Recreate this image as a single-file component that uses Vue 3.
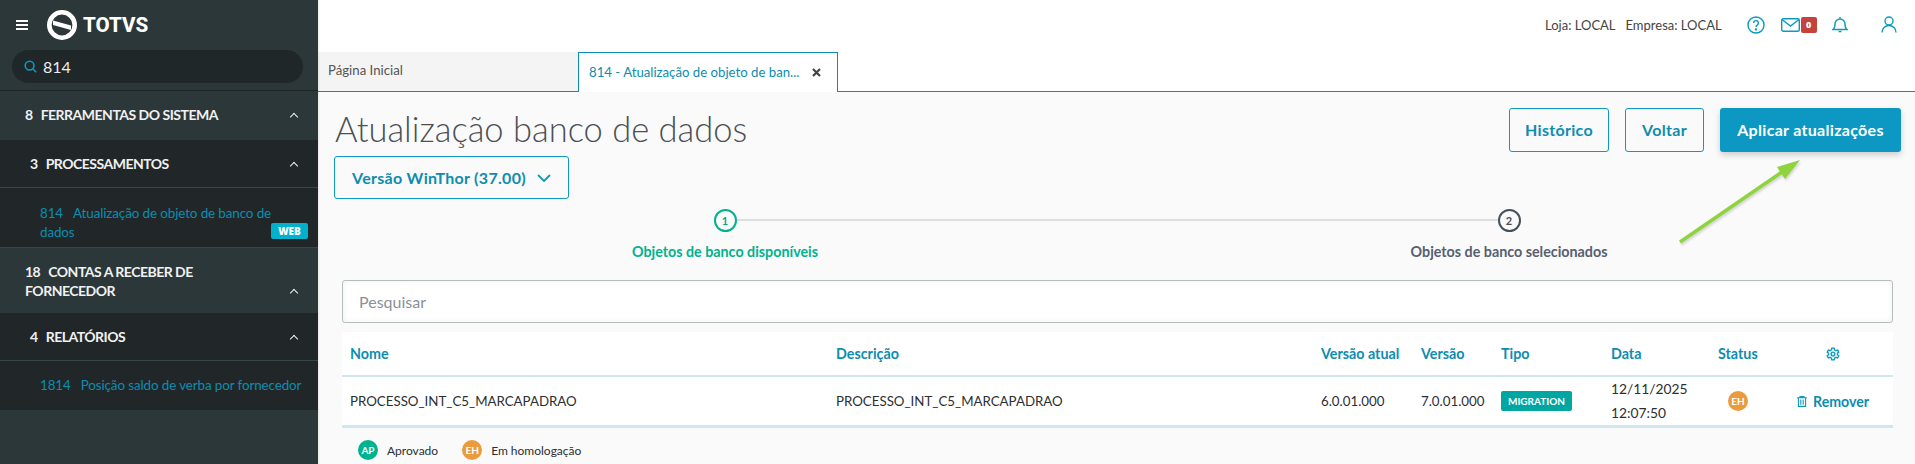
<script setup>
const headers = [
  { label: 'Nome' }, { label: 'Descrição' }, { label: 'Versão atual' }, { label: 'Versão' },
  { label: 'Tipo' }, { label: 'Data' }, { label: 'Status' }
]
</script>

<template>
  <div class="app">
    <aside class="side">
      <div class="brand">
        <svg class="burger" width="12" height="10" viewBox="0 0 12 10"><path d="M0 1h12M0 5h12M0 9h12" stroke="#fff" stroke-width="2"/></svg>
        <svg class="logo" width="30" height="30" viewBox="0 0 30 30">
          <circle cx="15" cy="15" r="12.700" fill="none" stroke="#fff" stroke-width="4.600"/>
          <path d="M6 10.500 L24 15.500 V20 L6 15 Z" fill="#fff"/>
        </svg>
        <span class="logotext">TOTVS</span>
      </div>
      <div class="searchwrap">
        <div class="search">
          <svg width="13" height="13" viewBox="0 0 13 13" fill="none" stroke="#0c9abe" stroke-width="1.6"><circle cx="5.600" cy="5.600" r="4.400"/><path d="M8.800 8.800 12.200 12.200"/></svg>
          <span>814</span>
        </div>
      </div>
      <div class="group g1"><span><b>8</b>FERRAMENTAS DO SISTEMA</span><i class="chev"></i></div>
      <div class="group g2 dark line"><span><b>3</b>PROCESSAMENTOS</span><i class="chev"></i></div>
      <div class="item i1 dark line">
        <span class="lnk"><em>814</em>Atualização de objeto de banco de dados</span>
        <span class="web">WEB</span>
      </div>
      <div class="group g3"><span><b>18</b>CONTAS A RECEBER DE FORNECEDOR</span><i class="chev"></i></div>
      <div class="group g4 dark line"><span><b>4</b>RELATÓRIOS</span><i class="chev"></i></div>
      <div class="item i2 dark"><span class="lnk"><em>1814</em>Posição saldo de verba por fornecedor</span></div>
    </aside>

    <main class="main">
      <header class="top">
        <span class="loc">Loja: LOCAL</span>
        <span class="loc emp">Empresa: LOCAL</span>
        <svg class="ic help" width="18" height="18" viewBox="0 0 18 18" fill="none" stroke="#0c9abe" stroke-width="1.4">
          <circle cx="9" cy="9" r="8"/><path d="M6.600 7a2.400 2.400 0 1 1 3.600 2.100c-.8.5-1.200.9-1.200 1.900"/><circle cx="9" cy="13.400" r=".5" fill="#0c9abe"/>
        </svg>
        <svg class="ic mail" width="19" height="14" viewBox="0 0 19 14" fill="none" stroke="#0c9abe" stroke-width="1.4">
          <rect x=".7" y=".7" width="17.600" height="12.600" rx="1.500"/><path d="M1 1.500 9.500 8 18 1.500"/>
        </svg>
        <span class="badge">0</span>
        <svg class="ic bell" width="16" height="17" viewBox="0 0 16 17" fill="none" stroke="#0c9abe" stroke-width="1.4">
          <path d="M1 13.500h14c-1.500-1-2-2.500-2-5.500a5 5 0 0 0-10 0c0 3-.5 4.500-2 5.500Z"/><path d="M6.500 15.500h3M8 1v1.500"/>
        </svg>
        <svg class="ic user" width="16" height="17" viewBox="0 0 16 17" fill="none" stroke="#0c9abe" stroke-width="1.4">
          <circle cx="8" cy="5" r="4"/><path d="M1 16.500c0-4 3-7 7-7s7 3 7 7"/>
        </svg>
      </header>

      <nav class="tabs">
        <div class="tab idle">Página Inicial</div>
        <div class="tab active">
          <span>814 - Atualização de objeto de ban...</span>
          <svg width="9" height="9" viewBox="0 0 9 9"><path d="M1 1 8 8M8 1 1 8" stroke="#444" stroke-width="2.200"/></svg>
        </div>
      </nav>

      <section class="content">
        <div class="headrow">
          <div class="titleblock">
            <h1>Atualização banco de dados</h1>
            <button class="btn select">
              Versão WinThor (37.00)
              <svg width="14" height="8" viewBox="0 0 14 8" fill="none" stroke="#0c9abe" stroke-width="1.8"><path d="M1 1l6 6 6-6"/></svg>
            </button>
          </div>
          <div class="actions">
            <button class="btn hist">Histórico</button>
            <button class="btn volt">Voltar</button>
            <button class="btn primary">Aplicar atualizações</button>
          </div>
        </div>

        <div class="stepper">
          <div class="step on"><span class="dot">1</span><span class="lab">Objetos de banco disponíveis</span></div>
          <div class="bar"></div>
          <div class="step"><span class="dot">2</span><span class="lab">Objetos de banco selecionados</span></div>
        </div>

        <div class="filter">Pesquisar</div>

        <div class="table">
          <div class="row head">
            <div v-for="h in headers" :key="h.label" class="cell">{{ h.label }}</div>
            <div class="cell gear">
              <svg width="14" height="14" viewBox="0 0 24 24" fill="none" stroke="#0c9abe" stroke-width="2.400">
                <circle cx="12" cy="12" r="3.200"/>
                <path d="M10 2h4l.6 3 2.400 1.400 2.900-1 2 3.400-2.300 2v2.400l2.300 2-2 3.400-2.900-1L14.600 19l-.6 3h-4l-.6-3L7 17.600l-2.900 1-2-3.400 2.300-2v-2.400l-2.300-2 2-3.400 2.900 1L9.400 5Z"/>
              </svg>
            </div>
          </div>
          <div class="row body">
            <div class="cell">PROCESSO_INT_C5_MARCAPADRAO</div>
            <div class="cell">PROCESSO_INT_C5_MARCAPADRAO</div>
            <div class="cell">6.0.01.000</div>
            <div class="cell">7.0.01.000</div>
            <div class="cell"><span class="tag">MIGRATION</span></div>
            <div class="cell date">12/11/2025<br />12:07:50</div>
            <div class="cell stat"><span class="av eh">EH</span></div>
            <div class="cell rem">
              <svg width="10" height="11" viewBox="0 0 10 11" fill="none" stroke="#0c9abe" stroke-width="1.100"><path d="M0 1.800h10M3 1.800V.6h4v1.200M1.400 1.800V10.400h7.200V1.800M3.800 3.500v5.200M6.200 3.500v5.200"/></svg>
              Remover
            </div>
          </div>
        </div>

        <div class="legend">
          <span class="av ap">AP</span><span class="ltxt">Aprovado</span>
          <span class="av eh">EH</span><span class="ltxt">Em homologação</span>
        </div>
      </section>

      <svg class="arrow" width="130" height="95" viewBox="0 0 130 95">
        <path d="M4 87 L106 17" stroke="#8fd33f" stroke-width="3.500"/>
        <path d="M124 5 L101 12 L109 24 Z" fill="#8fd33f"/>
      </svg>
    </main>
  </div>
</template>

<style>
html, body { margin: 0; height: 100%; overflow: hidden; }
</style>

<style scoped>
.app { display: flex; width: 1915px; height: 464px; overflow: hidden; font-family: Lato, "Open Sans", sans-serif; }
.side { width: 318px; flex: none; height: 464px; background: #2c3739; color: #fff; box-shadow: 1px 0 2px rgba(0,0,0,.08); z-index: 1; }
.brand { height: 50px; display: flex; align-items: center; padding-left: 16px; box-sizing: border-box; }
.burger { margin-right: 19px; }
.logo { margin-right: 6px; }
.logotext { font: 800 20.500px/1 Roboto, sans-serif; }
.searchwrap { height: 41px; box-sizing: border-box; padding: 0 15px 0 12px; border-bottom: 1px solid #1e2527; }
.search { height: 33px; border-radius: 17px; background: #202729; display: flex; align-items: center; gap: 6px; padding-left: 12px; font-size: 16px; color: #eee; }
.group { display: flex; justify-content: space-between; align-items: center; font-weight: 700; font-size: 14px; line-height: 19px; letter-spacing: -.5px; color: #f1f1f1; box-sizing: border-box; }
.group b { margin-right: 8px; font-weight: 700; }
.g1 { height: 49px; padding: 0 21px 3px 25px; }
.g2, .g4 { padding: 0 21px 0 30px; height: 48px; }
.g3 { height: 65px; padding: 0 21px 0 25px; }
.g3 span { width: 220px; }
.g3 .chev { margin-top: 24px; }
.dark { background: #212729; }
.line { border-bottom: 1px solid #36464a; }
.chev { width: 5px; height: 5px; border-left: 1.500px solid #f1f1f1; border-top: 1.500px solid #f1f1f1; transform: rotate(45deg); margin-top: 5px; flex: none; }
.item { position: relative; padding: 0 10px 0 40px; box-sizing: border-box; color: #0c8db0; font-size: 13.400px; line-height: 19px; letter-spacing: -.1px; }
.i1 { height: 60px; padding-top: 16px; }
.i2 { height: 49px; padding-top: 15px; }
.lnk em { font-style: normal; margin-right: 10px; }
.web { position: absolute; right: 10px; top: 35px; width: 37px; height: 16px; border-radius: 2px; background: #00b2cb; color: #fff; font: 800 10px/16px "Open Sans", sans-serif; text-align: center; }
.main { flex: 1; min-width: 0; position: relative; background: #fafafa; }
.top { height: 52px; background: #fff; display: flex; align-items: center; font-size: 13px; color: #444; padding-bottom: 3px; box-sizing: border-box; padding-left: 1227px; }
.emp { margin-left: 10px; margin-right: 25px; }
.ic { flex: none; }
.mail { margin-left: 16px; }
.badge { width: 16px; height: 16px; background: #c4433c; color: #fff; border-radius: 2px; font: 800 9px/16px "Open Sans", sans-serif; text-align: center; margin-left: 1px; margin-right: 15px; }
.user { margin-left: 33px; }
.tabs { height: 40px; display: flex; border-bottom: 1px solid #0c8db0; background: #fff; box-sizing: border-box; }
.tab { box-sizing: border-box; height: 39px; font-size: 13.200px; line-height: 36px; width: 260px; }
.idle { background: #f4f4f4; color: #555; padding-left: 10px; }
.active { height: 40px; background: #fff; color: #0c8db0; padding-left: 10px; border: 1px solid #0c8db0; border-bottom: 0; display: flex; align-items: center; gap: 13px; position: relative; line-height: 1; margin-bottom: -1px; }
.active span { white-space: nowrap; }
.content { padding: 0 24px 0 16px; position: relative; }
.headrow { display: flex; justify-content: space-between; height: 107px; }
.titleblock { display: flex; flex-direction: column; }
h1 { margin: 0; font-size: 34.500px; font-weight: 300; line-height: 46px; height: 64px; padding: 14px 0 0 1px; box-sizing: border-box; color: #4a5055; white-space: nowrap; }
.btn { font: 700 16px/1 Lato, sans-serif; letter-spacing: .3px; color: #0c8db0; background: transparent; border: 1px solid #0c9abe; border-radius: 3px; height: 44px; box-sizing: border-box; padding: 0; }
.select { width: 235px; height: 43px; display: flex; align-items: center; justify-content: center; gap: 11px; }
.actions { display: flex; gap: 16px; padding-top: 16px; margin-right: -10px; }
.hist { width: 100px; }
.volt { width: 79px; }
.primary { width: 181px; background: #0c98c2; color: #fff; border: 0; box-shadow: 0 3px 6px rgba(0,0,0,.18); }
.stepper { display: flex; align-items: flex-start; margin-top: 10px; padding-left: 396px; height: 71px; position: relative; margin-left: -16px; }
.step { width: 22px; display: flex; flex-direction: column; align-items: center; position: relative; z-index: 1; }
.dot { width: 23px; height: 23px; flex: none; box-sizing: border-box; border-radius: 50%; border: 2px solid #46505a; color: #46505a; font-size: 11px; font-weight: 700; line-height: 19px; text-align: center; }
.lab { white-space: nowrap; margin-top: 11px; font-size: 14.300px; font-weight: 700; line-height: 18px; color: #556070; }
.on .dot { border-color: #00b28e; color: #00a98a; }
.on .lab { color: #00b28e; }
.bar { width: 762px; height: 2px; background: #dcdfe1; margin-top: 10px; }
.filter { margin: 0 0 0 8px; width: 1551px; height: 43px; box-sizing: border-box; border: 1px solid #b5bdbf; border-radius: 3px; background: #fff; box-shadow: inset 0 0 6px rgba(0,0,0,.06); color: #8b9196; font-size: 16px; line-height: 41px; padding-left: 16px; }
.table { margin: 9px 0 0 8px; width: 1551px; background: #fff; }
.row { display: grid; grid-template-columns: 486px 485px 100px 80px 110px 107px 87px 1fr; align-items: center; }
.cell { padding-left: 8px; white-space: nowrap; }
.head { height: 43px; border-bottom: 2px solid #cfe8f0; color: #0c8db0; font-size: 14.300px; font-weight: 700; box-sizing: content-box; }
.gear { display: flex; justify-content: flex-start; padding-left: 29px; }
.body { height: 48px; border-bottom: 3px solid #cfe8f0; font-size: 13.300px; color: #2b2f33; }
.tag { display: inline-block; height: 20px; width: 71px; border-radius: 2px; background: #00a7a2; color: #fff; font-size: 10px; font-weight: 700; line-height: 20px; text-align: center; }
.date { line-height: 24px; font-size: 13.800px; }
.stat { padding-left: 18px; display: flex; }
.av { display: inline-block; width: 20px; height: 20px; border-radius: 50%; color: #fff; font-size: 10px; font-weight: 700; line-height: 20px; text-align: center; flex: none; }
.eh { background: #ea9b3e; }
.ap { background: #00b28e; }
.rem { color: #0c8db0; font-weight: 700; font-size: 14.200px; display: flex; align-items: center; gap: 6px; padding-left: 0; }
.legend { display: flex; align-items: center; margin-left: 8px; padding-left: 16px; height: 44px; font-size: 12px; color: #2b2f33; }
.ltxt { margin-left: 9px; margin-right: 24px; }
.arrow { position: absolute; left: 1358px; top: 155px; filter: drop-shadow(1px 2px 1px rgba(0,0,0,.15)); }
</style>
